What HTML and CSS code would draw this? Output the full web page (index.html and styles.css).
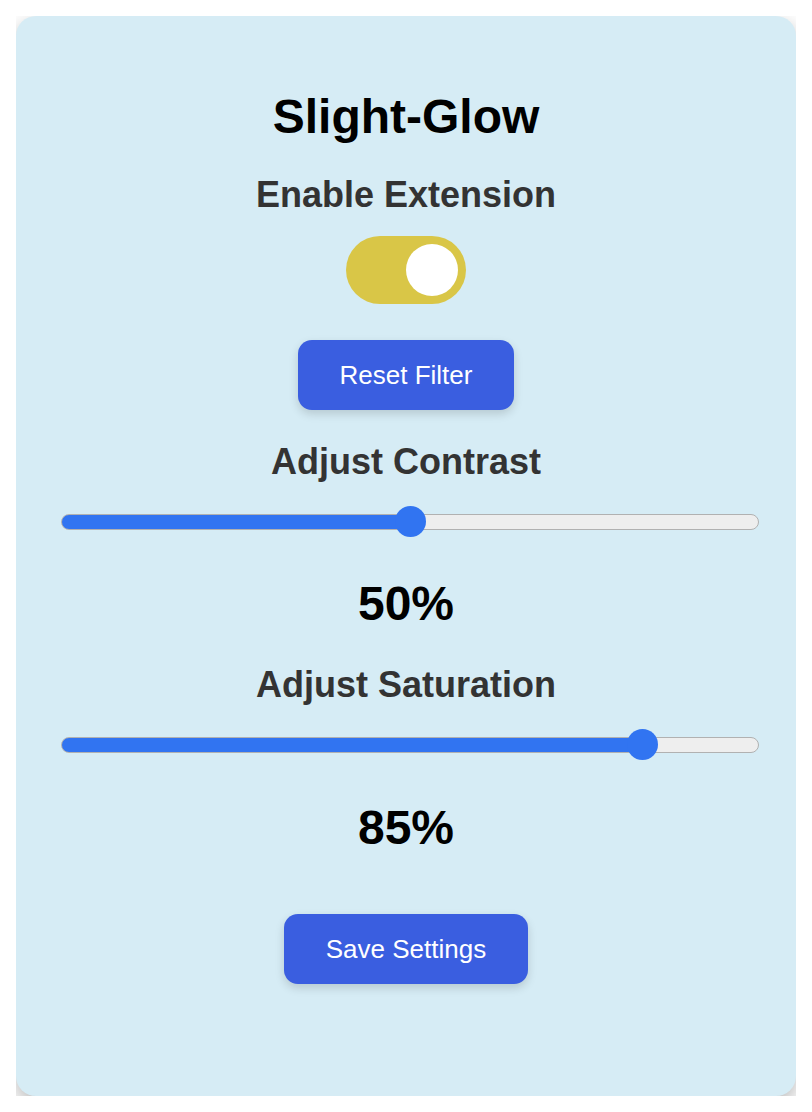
FILE: index.html
```html
<!DOCTYPE html>
<html lang="en">
<head>
  <meta charset="UTF-8">
  <meta name="viewport" content="width=device-width, initial-scale=1.0">
  <title>Slight-Glow</title>
  <link rel="stylesheet" href="styles.css">
</head>
<body>
  <div class="popup">
    <h1 class="title">Slight-Glow</h1>
    <h2 class="label label-enable">Enable Extension</h2>
    <label class="switch">
      <input type="checkbox" id="enableToggle" checked>
      <span class="switch-track"></span>
    </label>
    <button class="btn btn-reset" id="resetBtn">Reset Filter</button>

    <h2 class="label label-contrast">Adjust Contrast</h2>
    <input type="range" class="range range-first" id="contrastRange" min="0" max="100" value="50"
      style="--fill: 50%">
    <div class="value value-first" id="contrastValue">50%</div>

    <h2 class="label label-saturation">Adjust Saturation</h2>
    <input type="range" class="range" id="saturationRange" min="0" max="100" value="85"
      style="--fill: 85%">
    <div class="value value-second" id="saturationValue">85%</div>

    <button class="btn btn-save" id="saveBtn">Save Settings</button>
  </div>

  <script>
    function bindRange(rangeId, valueId) {
      const range = document.getElementById(rangeId);
      const value = document.getElementById(valueId);
      range.addEventListener('input', function () {
        range.style.setProperty('--fill', range.value + '%');
        value.textContent = range.value + '%';
      });
    }

    bindRange('contrastRange', 'contrastValue');
    bindRange('saturationRange', 'saturationValue');

    document.getElementById('resetBtn').addEventListener('click', function () {
      ['contrastRange', 'saturationRange'].forEach(function (id) {
        const range = document.getElementById(id);
        range.value = 50;
        range.dispatchEvent(new Event('input'));
      });
    });
  </script>
</body>
</html>
```

FILE: styles.css
```css
/* General Styles */
body {
  margin: 16px;
  background: #fff;
  font-family: 'Liberation Sans', Helvetica, Arial, sans-serif;
}

.popup {
  box-sizing: border-box;
  width: 780px;
  height: 1080px;
  padding: 73px 45px 0;
  background: #d6ecf5;
  border-radius: 20px;
  box-shadow: 0 8px 20px rgba(0, 0, 0, 0.28);
  display: flex;
  flex-direction: column;
  align-items: center;
}

.title {
  margin: 0;
  font-size: 48px;
  line-height: 56px;
  font-weight: bold;
  color: #000;
}

.label {
  margin: 0;
  font-size: 36px;
  line-height: 42px;
  font-weight: bold;
  color: #333;
}

.label-enable {
  margin-top: 29px;
}

.label-contrast {
  margin-top: 31px;
}

.label-saturation {
  margin-top: 32px;
}

/* Toggle */
.switch {
  position: relative;
  display: block;
  width: 120px;
  height: 68px;
  margin-top: 20px;
  cursor: pointer;
}

.switch input {
  display: none;
}

.switch-track {
  position: absolute;
  inset: 0;
  background: #b9b9b9;
  border-radius: 34px;
  transition: background 0.3s ease;
}

.switch-track::before {
  content: '';
  position: absolute;
  left: 8px;
  top: 8px;
  width: 52px;
  height: 52px;
  background: #fff;
  border-radius: 50%;
  transition: transform 0.3s ease;
}

.switch input:checked + .switch-track {
  background: #d9c647;
}

.switch input:checked + .switch-track::before {
  transform: translateX(52px);
}

/* Buttons */
.btn {
  height: 70px;
  border: none;
  border-radius: 14px;
  background: #3a5ee0;
  color: #fff;
  font-family: inherit;
  font-size: 26px;
  cursor: pointer;
  box-shadow: 0 4px 10px rgba(0, 0, 0, 0.15);
}

.btn:hover {
  background: #2f50c8;
}

.btn-reset {
  width: 216px;
  margin-top: 36px;
}

.btn-save {
  width: 244px;
  margin-top: 58px;
}

/* Sliders */
.range {
  -webkit-appearance: none;
  appearance: none;
  align-self: flex-start;
  width: 698px;
  height: 31px;
  margin: 23px 0 0;
  padding: 0;
  background: transparent;
}

.range::-webkit-slider-runnable-track {
  height: 16px;
  box-sizing: border-box;
  border: 1.5px solid #b1b1b1;
  border-radius: 8px;
  background: linear-gradient(to right, #3174f1 var(--fill), #eeeeee var(--fill));
}

.range::-webkit-slider-thumb {
  -webkit-appearance: none;
  width: 31px;
  height: 31px;
  margin-top: -9px;
  border-radius: 50%;
  background: #3174f1;
  border: none;
}

.value {
  font-size: 48px;
  line-height: 56px;
  font-weight: bold;
  color: #000;
}

.value-first {
  margin-top: 39px;
}

.value-second {
  margin-top: 40px;
}
```
